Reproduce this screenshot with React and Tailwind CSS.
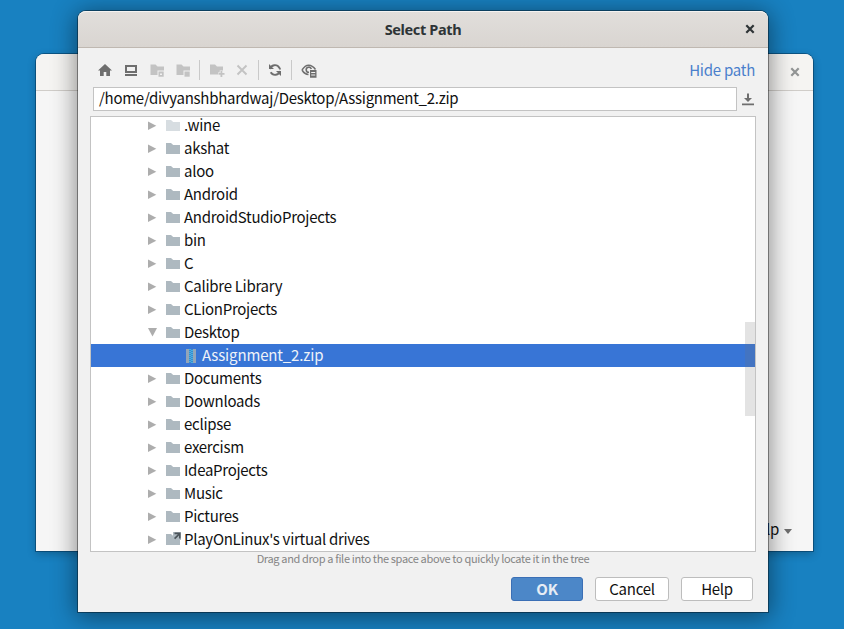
import React from 'react';

const rows = [
  { name: '.wine', kind: 'hidden' },
  { name: 'akshat' },
  { name: 'aloo' },
  { name: 'Android' },
  { name: 'AndroidStudioProjects' },
  { name: 'bin' },
  { name: 'C' },
  { name: 'Calibre Library' },
  { name: 'CLionProjects' },
  { name: 'Desktop', open: true },
  { name: 'Assignment_2.zip', kind: 'zip' },
  { name: 'Documents' },
  { name: 'Downloads' },
  { name: 'eclipse' },
  { name: 'exercism' },
  { name: 'IdeaProjects' },
  { name: 'Music' },
  { name: 'Pictures' },
  { name: "PlayOnLinux's virtual drives", kind: 'link' },
];

function Icon({ children, className = '' }) {
  return (
    <svg width="16" height="16" viewBox="0 0 16 16" className={`block shrink-0 ${className}`}>
      {children}
    </svg>
  );
}

const FOLDER = 'M1.500 2.500h5l2 2H15V13H1.500z';

function FolderIcon({ kind }) {
  return (
    <Icon>
      <path d="M1 2h5l2.200 2H15v9H1z" fill={kind === 'hidden' ? '#d7dde1' : '#aeb9c0'} />
      {kind === 'link' && (
        <>
          <path d="M8 0h8v8H8z" fill="#aeb9c0" />
          <path d="M9.500 0.600H15.600V6.600H14V3.400L10.200 7.200L9 6L12.800 2.200H9.500z" fill="#4c555b" />
        </>
      )}
    </Icon>
  );
}

function ZipIcon() {
  const teeth = [1, 3, 5, 7, 9, 11, 13];
  return (
    <Icon>
      <path d="M3 1h3v14H3zM10 1h3v14h-3z" fill="#93a5b8" />
      <path d="M6 1h4v14H6z" fill="#3e86cf" />
      {teeth.map((y) => (
        <path key={y} d={`M6 ${y}h2v1h-2zM8 ${y + 1}h2v1h-2z`} fill="#45b4e2" />
      ))}
    </Icon>
  );
}

function TreeRow({ row }) {
  const zip = row.kind === 'zip';
  return (
    <div className={`flex h-[23px] shrink-0 items-center ${zip ? 'bg-[#3875d6] pl-[92px] tracking-[-0.150px] text-[#eef2f8]' : 'pl-[54px]'}`}>
      {!zip && (
        <svg width="16" height="16" viewBox="0 0 16 16" className="mr-[4px] block shrink-0">
          <path d={row.open ? 'M3 3h9L7.500 11.500z' : 'M3 3.500l8.300 4.200L3 12z'} fill="#adadad" />
        </svg>
      )}
      {zip ? <ZipIcon /> : <FolderIcon kind={row.kind} />}
      <span className="mb-[2px] ml-[3px] whitespace-pre leading-[15px]">{row.name}</span>
    </div>
  );
}

function Separator({ className }) {
  return <div className={`h-5 w-px bg-[#c9c9c9] ${className}`} />;
}

function Toolbar() {
  return (
    <div className="flex h-[39px] items-center pt-[5px] pl-[19px] pr-[13px]">
      <Icon>
        <path d="M8 2L1 8.500h2V14h3.700v-4h2.600v4H13V8.500h2z" fill="#6e6e6e" />
      </Icon>
      <Icon className="ml-[10px]">
        <path d="M2 3h12v8H2zM4 5v4h8V5zM2 12h12v2H2z" fillRule="evenodd" fill="#6e6e6e" />
      </Icon>
      <Icon className="ml-[10px]">
        <path d={FOLDER} fill="#c3c3c3" />
        <path d="M8.500 8.500h7v7h-7z" fill="#f1f1f1" />
        <path d="M9.500 9.500h5.200v5.200H9.500zM11 11.500v1.500h2v-1.500z" fillRule="evenodd" fill="#c3c3c3" />
      </Icon>
      <Icon className="ml-[10px]">
        <path d={FOLDER} fill="#c3c3c3" />
        <path d="M8.500 8.500h7v7h-7z" fill="#f1f1f1" />
        <path d="M9.500 9.500h5.200v5.200H9.500z" fill="#c3c3c3" />
      </Icon>
      <Separator className="ml-[8px]" />
      <Icon className="ml-[9px]">
        <path d="M1 2.500h5l2 2h6v4h-3.300v2H9V12.500H1z" fill="#c3c3c3" />
        <path d="M11.500 9h1.800v2h2.200v1.800h-2.200v2.200h-1.800v-2.200H9.500V11h2z" fill="#c3c3c3" />
      </Icon>
      <Icon className="ml-[9px]">
        <path d="M3.500 3.500l9 9M12.500 3.500l-9 9" stroke="#c3c3c3" strokeWidth="1.900" />
      </Icon>
      <Separator className="ml-[8px]" />
      <Icon className="ml-[8px]">
        <path d="M3 7A5 4.800 0 0 1 12.300 5.700Q13 6.300 13 7.500M13 9A5 4.800 0 0 1 3.700 10.300" fill="none" stroke="#6e6e6e" strokeWidth="1.900" />
        <path d="M2 2v5h5zM14 14V9H9z" fill="#6e6e6e" />
      </Icon>
      <Separator className="ml-[8px]" />
      <Icon className="ml-[9px]">
        <path d="M1 8Q4 3.200 7.700 3.200T14.500 7.500M1 8Q3.500 12.300 7.500 12.500" fill="none" stroke="#6e6e6e" strokeWidth="1.500" />
        <path d="M8 10.300A2.600 2.600 0 1 1 10.300 7" fill="none" stroke="#6e6e6e" strokeWidth="1.600" />
        <path d="M9 8h6.500v7.800H9zM10.200 10v1h4v-1zM10.200 12.500v1h4v-1z" fillRule="evenodd" fill="#6e6e6e" />
      </Icon>
      <span className="ml-auto whitespace-nowrap leading-[22px] tracking-[-0.250px] text-[#4a7fcc]">Hide path</span>
    </div>
  );
}

function CloseIcon({ color }) {
  return (
    <svg width="10" height="10" viewBox="0 0 10 10" className="block">
      <path d="M1.300 1.300l7.400 7.400M8.700 1.300L1.300 8.700" stroke={color} strokeWidth="2.200" />
    </svg>
  );
}

function BackgroundWindow() {
  return (
    <div className="absolute top-[54px] left-[36px] flex h-[497px] w-[777px] flex-col overflow-hidden rounded-t-[8px] bg-[#f6f6f6] shadow-[0_0_0_1px_rgba(0,45,80,0.5),0_3px_9px_rgba(0,0,0,0.25)]">
      <div className="flex h-[37px] shrink-0 items-center justify-end border-b border-[#d0cdc9] bg-[#f5f4f2] pr-[13px]">
        <CloseIcon color="#929595" />
      </div>
      <div className="mt-auto mb-[11px] flex items-center justify-end pr-[21px] leading-[22px]">
        <span>Help</span>
        <svg width="8" height="5" viewBox="0 0 8 5" className="mt-[4px] ml-[5px]">
          <path d="M0 0h8L4 5z" fill="#6e6e6e" />
        </svg>
      </div>
    </div>
  );
}

function DialogButton({ className, children }) {
  return (
    <button className={`flex h-[24px] items-center justify-center rounded-[3px] border leading-[22px] ${className}`}>
      {children}
    </button>
  );
}

export default function App() {
  return (
    <div className="relative h-[629px] w-[844px] overflow-hidden bg-[#1881c1] font-['Noto_Sans_CJK_SC','Noto_Sans',sans-serif] text-[15px] tracking-[-0.280px] text-[#111111]">
      <BackgroundWindow />
      <div className="absolute top-[11px] left-[78px] flex h-[601px] w-[690px] flex-col rounded-t-[8px] bg-[#f1f1f1] shadow-[0_0_0_1px_rgba(0,0,0,0.38),0_3px_24px_2px_rgba(0,0,0,0.45)]">
        <div className="relative flex h-[37px] shrink-0 items-center justify-center rounded-t-[8px] border-t border-b border-t-[#f5f3f1] border-b-[#bfb8b1] bg-linear-to-b from-[#e1dedb] to-[#d9d5d1] font-['Noto_Sans',sans-serif] text-[14.500px] font-bold tracking-[-0.350px] text-[#2e3436]">
          Select Path
          <div className="absolute top-[12px] right-[13px]">
            <CloseIcon color="#2e3436" />
          </div>
        </div>
        <Toolbar />
        <div className="flex h-[24px] items-center pl-[15px]">
          <div className="flex h-[24px] w-[644px] items-center border border-[#c3c3c3] bg-white pb-[3px] pl-[5px] leading-[19px]">
            /home/divyanshbhardwaj/Desktop/Assignment_2.zip
          </div>
          <svg width="12" height="13" viewBox="0 0 12 13" className="ml-[5px]">
            <path d="M5 0.500h2v4.500h3L6 9L2 5h3zM0 10.500h12v1.800H0z" fill="#6e6e6e" />
          </svg>
        </div>
        <div className="relative mt-[5px] ml-[12px] h-[436px] w-[666px] overflow-hidden border border-[#c3c3c3] bg-white">
          <div className="-mt-[3px] flex flex-col">
            {rows.map((row) => (
              <TreeRow key={row.name} row={row} />
            ))}
          </div>
          <div className="absolute top-[205px] right-0 h-[94px] w-[10px] bg-[#737373]/20" />
        </div>
        <div className="h-[15px] text-center text-[11px] leading-[13px] tracking-[-0.350px] text-[#858585]">
          Drag and drop a file into the space above to quickly locate it in the tree
        </div>
        <div className="mt-[10px] flex justify-end gap-[12px] pr-[15px]">
          <DialogButton className="w-[72px] border-[#3b6fb5] bg-[#4c87c8] font-bold text-[#e7edf5]">OK</DialogButton>
          <DialogButton className="w-[74px] border-[#bdbdbd] bg-white">Cancel</DialogButton>
          <DialogButton className="w-[72px] border-[#bdbdbd] bg-white">Help</DialogButton>
        </div>
      </div>
    </div>
  );
}
